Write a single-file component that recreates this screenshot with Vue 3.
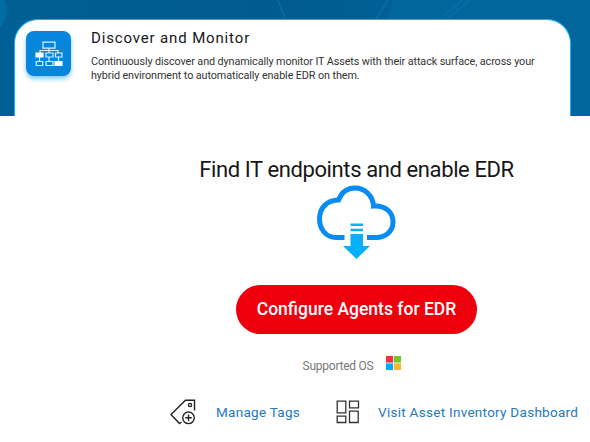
<script setup>
const description = [
  'Continuously discover and dynamically monitor IT Assets with their attack surface, across your',
  'hybrid environment to automatically enable EDR on them.',
]
</script>

<template>
  <main class="page">
    <header class="banner">
      <svg class="backdrop" width="590" height="116" viewBox="0 0 590 116" aria-hidden="true">
        <defs>
          <linearGradient id="sky" x1="0" x2="1">
            <stop offset="0" stop-color="#005f94" />
            <stop offset=".45" stop-color="#005b90" />
            <stop offset="1" stop-color="#00669c" />
          </linearGradient>
        </defs>
        <path d="M0 0H590V116H0Z" fill="url(#sky)" />
        <circle cx="-17" cy="11" r="24" fill="#006ca4" />
        <path d="M392 0H590V116H560V19H386Q392 10 392 0Z" fill="#00669c" />
        <path d="M278 0L285 19M388 0L376 19M462 0L440 19M470 0L447 19" stroke="#0873aa" stroke-opacity=".8" stroke-width="1.500" fill="none" />
      </svg>
      <section class="card">
        <div class="tile">
          <svg width="28" height="26" viewBox="0 0 28 26" fill="none" stroke="#d9f0ff" stroke-width="1.2">
            <path d="M8 1.1h12v6H8zM14 7v2.5M5 12V9.5h18V12M14 9.5V12M4.500 16v4M14 16v4M23.500 16v4" />
            <path d="M1 12h7v4H1z" fill="#fff" stroke="#fff" />
            <path d="M11 12h7v4h-7zM20.500 12h6.500v4h-6.500zM1.200 20.500h6.500v4h-6.500zM11 20.500h7v4h-7z" />
            <path d="M20 20.500h7v4h-7z" fill="#fff" stroke="#fff" />
          </svg>
        </div>
        <div class="copy">
          <h1>Discover and Monitor</h1>
          <p><span v-for="line in description" :key="line">{{ line }}</span></p>
        </div>
      </section>
    </header>

    <section class="hero">
      <h2>Find IT endpoints and enable EDR</h2>
      <svg class="cloud" width="80" height="76" viewBox="0 0 80 76">
        <path d="M28.500 52.500H20C10 52.500 3.500 44 3.500 34C3.500 23 11 15 22.500 15C26 6 32 3 39 3C49 3 57 11 57.500 21C69 20 77 27 77 37C77 46 70 52.500 60 52.500H51" fill="none" stroke="#078cf4" stroke-width="5" />
        <path d="M34.500 38.500H47V41H34.500zM34.500 43.800H47V46.200H34.500zM34.500 49H47v12h7L40.500 74 27 61h7.500z" fill="#06b0fb" />
      </svg>
      <button type="button">Configure Agents for EDR</button>
      <div class="support">
        <span>Supported OS</span>
        <svg width="15" height="14" viewBox="0 0 15 14">
          <path d="M0 0h7v6.600H0z" fill="#f33340" />
          <path d="M8 0h7v6.600H8z" fill="#72c52c" />
          <path d="M0 7.400h7V14H0z" fill="#00a8f8" />
          <path d="M8 7.400h7V14H8z" fill="#ffb52b" />
        </svg>
      </div>
    </section>

    <nav class="links">
      <a class="tags">
        <svg width="26" height="26" viewBox="0 0 26 26" fill="none" stroke="#222" stroke-width="1.400">
          <path d="M11.500 23L9.500 24.500 1 15.500 15.500 1.200H24.500V11.500" />
          <circle cx="20" cy="6" r="1.600" />
          <circle cx="18.500" cy="18.800" r="5.800" />
          <path d="M18.500 15.500v6.600M15.200 18.800h6.600" />
        </svg>
        <span>Manage Tags</span>
      </a>
      <a class="inventory">
        <svg width="24" height="24" viewBox="0 0 24 24" fill="none" stroke="#333" stroke-width="1.300">
          <path d="M1.200 1.200h8.600v11.600H1.200zM13.500 1.200h9v6.600h-9zM1.200 16.200h8.600v6.300H1.200zM13.500 11.200h8.700v11.300h-8.700z" />
        </svg>
        <span>Visit Asset Inventory Dashboard</span>
      </a>
    </nav>
  </main>
</template>

<style>
body { margin: 0; background: #fff; }
</style>

<style scoped>
.page { width: 590px; height: 442px; overflow: hidden; background: #fff; font-family: Roboto, sans-serif; }
.banner { position: relative; box-sizing: border-box; height: 116px; padding: 19px 19px 0 14px; overflow: hidden; }
.backdrop { position: absolute; inset: 0; }
.card { position: relative; box-sizing: border-box; height: 98px; border: 1px solid #19aef5; border-bottom: 0; border-radius: 24px 24px 0 0; background: #fff; display: flex; padding: 11px 0 0 11px; }
.tile { display: flex; align-items: center; justify-content: center; flex: none; width: 45px; height: 45px; border-radius: 8px; background: #0586dc; box-shadow: 0 3px 5px #8dccf5; }
.copy { padding-left: 20px; white-space: nowrap; }
h1 { margin: -3px 0 0; font-size: 15px; line-height: 20px; font-weight: 400; letter-spacing: .85px; color: #171717; }
p { margin: 7px 0 0; font-size: 10.800px; line-height: 14px; letter-spacing: -.1px; color: #333; }
p span { display: block; }
.hero { display: flex; flex-direction: column; align-items: center; width: 713px; }
h2 { margin: 40px 0 0; font-size: 22px; line-height: 28px; font-weight: 400; letter-spacing: -.39px; color: #171717; white-space: nowrap; }
.cloud { margin: 1px 0 0 -1px; }
button { width: 241px; height: 49px; margin-top: 24px; padding: 0 0 2px; border: 0; border-radius: 25px; background: #ed000c; color: #fff; font: 500 17.500px Roboto, sans-serif; }
.support { display: flex; gap: 13px; margin: 22px 0 0 -9px; align-items: flex-start; font-size: 12px; line-height: 20px; letter-spacing: -.25px; color: #777; }
.links { display: flex; gap: 36px; padding: 23px 0 0 170px; color: #2579bd; font-size: 13.500px; line-height: 26px; white-space: nowrap; letter-spacing: .28px; }
.links a { display: flex; align-items: center; height: 26px; }
.tags { gap: 20px; }
.inventory { gap: 18px; }
</style>
